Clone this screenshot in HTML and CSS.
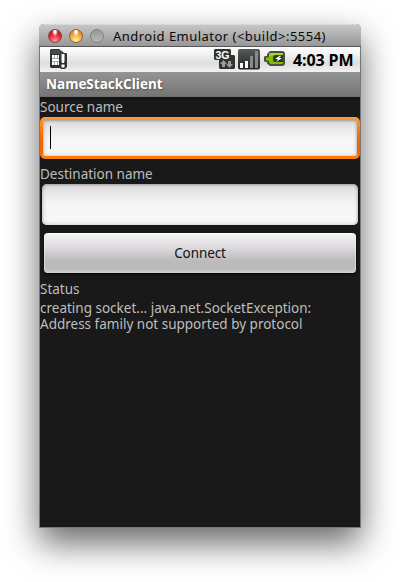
FILE: index.html
```html
<!DOCTYPE html>
<html lang="en">
<head>
<meta charset="utf-8">
<title>NameStackClient</title>
<link rel="stylesheet" href="styles.css">
</head>
<body>
<main class="window">
  <header class="titlebar">
    <span class="light red"></span><span class="light amber"></span><span class="light off"></span>
    <span class="window-title">Android Emulator (&lt;build&gt;:5554)</span>
  </header>
  <div class="statusbar">
    <svg class="sim" width="20" height="22" viewBox="0 0 20 22">
      <path d="M2 0h8l5 4h2q1 0 1 1v13l-2 2h-4l-1-1H2l-1-1V1z" fill="#303431"/>
      <path d="M2 1h8l3 3v1H2z" fill="#484c49"/>
      <path d="M3 6h7v10H3z" fill="#fff"/>
      <path d="M3 9.5h7M3 12.500h7M5.500 6v3M8.500 6v3M5.500 13v3M8.500 13v3" stroke="#a2a6a3" stroke-width="1"/>
      <path d="M12.500 5h3v7l-.5 2h-2l-.5-2zM12.500 15.500h3v3h-3z" fill="#fff"/>
    </svg>
    <svg class="network" width="22" height="22" viewBox="0 0 22 22">
      <path d="M1 0h15l1 1v5h3l1 1v12l-1 1H6l-1-1v-8H1l-1-1V1z" fill="#303331"/>
      <text x="1.500" y="9.500" textLength="14" lengthAdjust="spacingAndGlyphs" class="network-label">3G</text>
      <path d="M9.500 11L6 15h2v3h3v-3h2zM15.500 19l3.500-4h-2v-3h-3v3h-2z" fill="#999d9a"/>
    </svg>
    <svg class="signal" width="22" height="22" viewBox="0 0 22 22">
      <defs><linearGradient id="signal-bg" x2="0" y2="1"><stop stop-color="#555957"/><stop offset="1" stop-color="#242625"/></linearGradient></defs>
      <rect width="22" height="20.500" rx="2" fill="url(#signal-bg)"/>
      <path d="M2 14h3v5H2zM7 12h3v7H7z" fill="#fff"/>
      <path d="M12 7h3v12h-3zM17 2h3v17h-3z" fill="#858987"/>
    </svg>
    <svg class="battery" width="23" height="18" viewBox="0 0 23 18">
      <path d="M6 0H18q3 0 3 3v9q0 3-3 3H6L3 12.500V11H1L0 10V6l1-1h2V3z" fill="#4a513f"/>
      <path d="M6.500 2H18q1 0 1 1v9q0 1-1 1H6.500L5 11.500V9.500H2v-3h3v-3z" fill="#82bd00"/>
      <path d="M6.500 2H18q1 0 1 1v1H8L5 6V3.500z" fill="#a2d923"/>
      <path d="M11 4h8v7h-8L9 10V6z" fill="#303532"/>
      <path d="M16 4.500L11 8h3l-2 3 6-4h-3l2-2z" fill="#fff"/>
    </svg>
    <time class="clock">4:03 PM</time>
  </div>
  <h1 class="app-title"><span>NameStackClient</span></h1>
  <section class="content">
    <label class="source-label"><span>Source name</span></label>
    <div class="focus-ring"><div class="field"><span class="caret"></span></div></div>
    <label class="destination-label"><span>Destination name</span></label>
    <div class="field destination"></div>
    <button class="connect">Connect</button>
    <div class="status-label">Status</div>
    <p class="message">creating socket... java.net.SocketException:<br>Address family not supported by protocol</p>
  </section>
</main>
</body>
</html>
```
FILE: styles.css
```css
* { box-sizing: border-box; }
body {
  margin: 0;
  width: 400px;
  height: 582px;
  padding: 24px 39px 54px;
  overflow: hidden;
  background: #fff;
  font-family: "Noto Sans", "Open Sans", sans-serif;
}
.window {
  width: 322px;
  height: 504px;
  border: solid #777;
  border-width: 0 1px 1px;
  border-radius: 5px 5px 0 0;
  background: #191919;
  box-shadow: 0 15px 34px rgba(0,0,0,.6);
}
.titlebar {
  height: 23px;
  margin: 0 -1px;
  padding-left: 9px;
  display: flex;
  align-items: center;
  border-top: 1px solid #d8d8d8;
  border-bottom: 1px solid #555;
  border-radius: 5px 5px 0 0;
  background: linear-gradient(#c6c6c6, #979797);
}
.light {
  width: 14px;
  height: 14px;
  margin: 1px 7px 0 0;
  flex: none;
  border: 1px solid #777;
  border-radius: 50%;
}
.red { background: radial-gradient(ellipse at 50% 12%, #fff 0 10%, transparent 35%), radial-gradient(circle at 50% 90%, #ff9c95, #e62735 50%, #a70b19); border-color: #84434a; }
.amber { background: radial-gradient(ellipse at 50% 12%, #fff 0 10%, transparent 35%), radial-gradient(circle at 50% 90%, #fff89a, #f4a33d 55%, #b9651b); border-color: #8e6236; }
.off { background: linear-gradient(#969696, #b9b9b9); border-color: #818181; }
.window-title {
  margin-left: 2px;
  font-size: 13px;
  line-height: 20px;
  letter-spacing: .48px;
  color: #080808;
  white-space: nowrap;
}
.statusbar {
  height: 25px;
  display: flex;
  align-items: flex-start;
  padding: 2px 7px 0 9px;
  background: linear-gradient(#fff, #f1f1f1 30%, #dedede 65%, #f1f1f1);
}
.network { margin-left: auto; }
.network-label { font: bold 11px "Liberation Sans", sans-serif; fill: #fff; }
.signal { margin-left: 2px; }
.battery { margin: 2px 0 0 4px; }
.clock {
  width: 60px;
  margin: 0 0 0 6px;
  font: bold 16px/22px "Open Sans", sans-serif;
  letter-spacing: -.12px;
  color: #000;
  white-space: nowrap;
}
.app-title {
  height: 25px;
  margin: 0;
  padding-left: 6px;
  border-bottom: 1px solid #707070;
  background: repeating-linear-gradient(45deg, transparent 0 1px, rgba(0,0,0,.025) 1px 2px), linear-gradient(#969696, #777);
  font: bold 13.5px/24px "Open Sans", sans-serif;
  color: #fff;
  text-shadow: 1px 1px 2px #555;
}
.content {
  height: 430px;
  display: flex;
  flex-direction: column;
  background: linear-gradient(#101214, #191919 5px);
  color: #bebebe;
  font-size: 13.5px;
}
.source-label, .destination-label, .status-label {
  height: 20px;
  line-height: 20px;
  white-space: nowrap;
}
.focus-ring {
  height: 42px;
  padding: 3px;
  border-radius: 5px;
  background: linear-gradient(#ff9d34, #ff8b1b 15%, #f56800 50%, #f26200 80%, #ff820b);
}
.field {
  height: 36px;
  border-radius: 3px;
  background: linear-gradient(#dcdadb, #e8e5e6 20%, #f3f0f1 40%, #f7f6f7 55%, #f7f7f8);
  box-shadow: inset 0 1px 2px #8888, inset 1px 0 4px #9996, inset -1px 0 3px #9995, inset 0 -1px 0 #fff;
}
.caret {
  display: block;
  width: 1px;
  height: 23px;
  margin-left: 7px;
  position: relative;
  top: 6px;
  background: #000;
}
.destination-label { margin-top: 5px; }
.destination { width: 316px; height: 41px; margin: 0 2px; border-radius: 5px; }
.connect {
  height: 40px;
  margin: 8px 4px 0;
  padding: 0;
  border: 0;
  border-radius: 4px;
  background: linear-gradient(#fff, #f3f1f3 5%, #dddbdd 35%, #bcbabc 70%, #bbb 90%, #d2d2d2);
  box-shadow: inset 1px 0 1px #fff6, inset -1px 0 1px #fff6, 0 1px 2px #000;
  font: 13.5px/40px "Noto Sans", sans-serif;
  letter-spacing: -.1px;
  color: #111;
}
.status-label { margin-top: 6px; }
.message { margin: 1px 0 0; line-height: 16px; white-space: nowrap; }
```
